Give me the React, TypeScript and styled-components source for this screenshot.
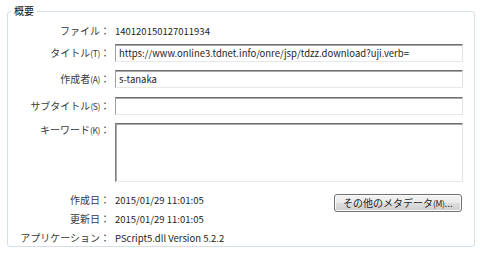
import styled, {createGlobalStyle} from "styled-components";

const Global = createGlobalStyle`
    html, body {
        margin: 0;
        padding: 0;
        background: #ffffff;
    }

    body {
        font-family: "Noto Sans CJK JP", "Noto Sans", sans-serif;
        color: #222;
    }
`;

const App = () => {
    return (
        <>
            <Global/>
            <Group>
                <Legend>概要</Legend>

                <Row $height={17} $gap={4}>
                    <Label>ファイル：</Label>
                    <Value>140120150127011934</Value>
                </Row>

                <Row $height={18} $gap={5}>
                    <Label>タイトル<Key>(T)</Key>：</Label>
                    <TextInput readOnly value="https://www.online3.tdnet.info/onre/jsp/tdzz.download?uji.verb="/>
                </Row>

                <Row $height={18} $gap={8}>
                    <Label>作成者<Key>(A)</Key>：</Label>
                    <TextInput readOnly value="s-tanaka"/>
                </Row>

                <Row $height={18} $gap={9}>
                    <Label>サブタイトル<Key>(S)</Key>：</Label>
                    <TextInput readOnly value=""/>
                </Row>

                <Row $height={59} $gap={8} $top>
                    <Label>キーワード<Key>(K)</Key>：</Label>
                    <TextArea readOnly value=""/>
                </Row>

                <Row $height={18} $gap={9}>
                    <Label>作成日：</Label>
                    <Value>2015/01/29 11:01:05</Value>
                    <MetaButton type="button">その他のメタデータ<Key>(M)</Key>...</MetaButton>
                </Row>

                <Row $height={18} $gap={1}>
                    <Label>更新日：</Label>
                    <Value>2015/01/29 11:01:05</Value>
                </Row>

                <Row $height={18} $gap={1}>
                    <Label>アプリケーション：</Label>
                    <Value>PScript5.dll Version 5.2.2</Value>
                </Row>
            </Group>
        </>
    );
};

export default App;

const Group = styled.fieldset`
    box-sizing: border-box;
    margin: 4px 0 0 7px;
    width: 468px;
    height: 243px;
    padding: 0 11px 0 0;
    border: 1px solid #d5dfe5;
    border-radius: 3px;
    min-width: 0;
`;

const Legend = styled.legend`
    margin-left: 3px;
    padding: 0 3px;
    font-size: 10px;
    line-height: 14px;
    color: #111;
`;

const Row = styled.div<{ $height: number; $gap: number; $top?: boolean }>`
    display: flex;
    align-items: ${(p) => (p.$top ? "flex-start" : "center")};
    gap: 5px;
    height: ${(p) => p.$height}px;
    margin-top: ${(p) => p.$gap}px;
`;

const Label = styled.div`
    flex: 0 0 102px;
    text-align: right;
    font-size: 10px;
    line-height: 14px;
    color: #3a3a3a;
    white-space: nowrap;
`;

const Key = styled.span`
    font-size: 8.5px;
    letter-spacing: -0.4px;
`;

const Value = styled.div`
    font-size: 9.5px;
    line-height: 14px;
    color: #1e1e1e;
    white-space: nowrap;
`;

const TextInput = styled.input`
    box-sizing: border-box;
    width: 348px;
    height: 18px;
    margin: 0;
    padding: 0 3px;
    border: 1px solid;
    border-color: #6f6f6f #dfe3e8 #e6e9ec #a0a0a0;
    box-shadow: inset 0 1px 0 #a8a8a8;
    border-radius: 0;
    background: #fff;
    font-family: "Noto Sans CJK JP", "Noto Sans", sans-serif;
    font-size: 9.5px;
    color: #1e1e1e;
    outline: none;
`;

const TextArea = styled.textarea`
    box-sizing: border-box;
    width: 348px;
    height: 59px;
    margin: 0;
    padding: 2px 3px;
    border: 1px solid;
    border-color: #6f6f6f #dfe3e8 #e6e9ec #808080;
    box-shadow: inset 1px 1px 0 #a8a8a8;
    background: #fff;
    resize: none;
    outline: none;
    font-family: "Noto Sans CJK JP", "Noto Sans", sans-serif;
    font-size: 9.5px;
`;

const MetaButton = styled.button`
    align-self: flex-start;
    box-sizing: border-box;
    margin: 3px 1px 0 auto;
    width: 128px;
    height: 18px;
    padding: 0;
    border: 1px solid #707070;
    border-radius: 3px;
    background: linear-gradient(#f2f2f2 0%, #ebebeb 48%, #dddddd 52%, #cfcfcf 100%);
    box-shadow: inset 0 0 0 1px #fcfcfc;
    font-family: "Noto Sans CJK JP", "Noto Sans", sans-serif;
    font-size: 10px;
    line-height: 14px;
    color: #1e1e1e;
    white-space: nowrap;
`;
